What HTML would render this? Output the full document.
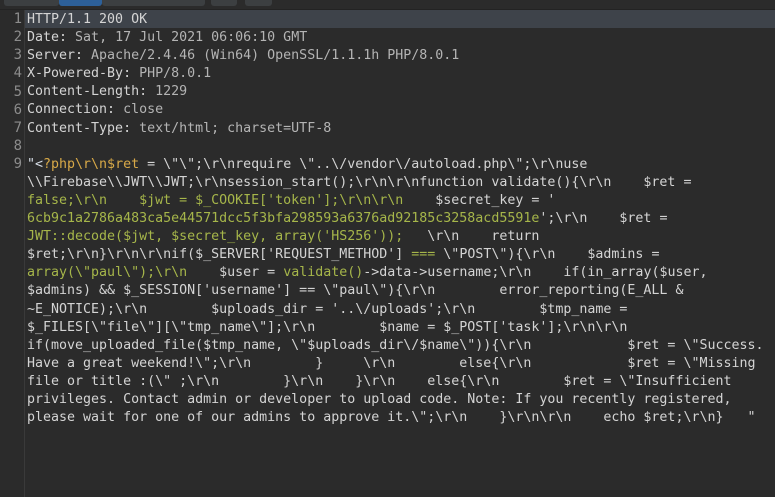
<!DOCTYPE html>
<html><head><meta charset="utf-8"><style>
html,body{margin:0;padding:0;background:#2b2b2b;width:775px;height:497px;overflow:hidden}
.top{position:absolute;left:0;top:0;width:775px;height:9px;background:#2b2b2b;border-bottom:1px solid #232323}
.tab{position:absolute;top:0;height:6px;background:#3c3f41;border-radius:0 0 3px 3px}
.gut{position:absolute;left:0;top:10px;width:24px;height:487px;background:#2b2b2b;border-right:1px solid #3a3a3a}
.hl{position:absolute;left:25px;top:10px;width:750px;height:18px;background:#3e434a}
pre{position:absolute;margin:0;top:11px;font-family:"DejaVu Sans Mono","Liberation Mono",monospace;font-size:13.3px;line-height:18.1px}
.num{left:0;width:22px;text-align:right;color:#8c8c8c;font-size:14px;top:10px;line-height:18.15px}
.code{left:27px;color:#d4d4d4}
.v{color:#b4b4b4}.y{color:#d8a948}.g{color:#a6b64a}.q{color:#d6dde6}
</style></head><body>
<div class="top"></div>
<div class="tab" style="left:4px;width:55px"></div>
<div class="tab" style="left:59px;width:43px;background:#2d6099"></div>
<div class="tab" style="left:102px;width:103px"></div>
<div class="tab" style="left:211px;width:26px"></div>
<div class="tab" style="left:245px;width:27px"></div>
<div class="gut"></div>
<div class="hl"></div>
<pre class="num">1
2
3
4
5
6
7
8
9</pre>
<pre class="code">HTTP/1.1 200 OK
Date: <span class="v">Sat, 17 Jul 2021 06:06:10 GMT</span>
Server: <span class="v">Apache/2.4.46 (Win64) OpenSSL/1.1.1h PHP/8.0.1</span>
X-Powered-By: <span class="v">PHP/8.0.1</span>
Content-Length: <span class="v">1229</span>
Connection: <span class="v">close</span>
Content-Type: <span class="v">text/html; charset=UTF-8</span>

<span class="q">"&lt;</span><span class="y">?php\r\n$ret</span> = \"\";\r\nrequire \"..\/vendor\/autoload.php\";\r\nuse
\\Firebase\\JWT\\JWT;\r\nsession_start();\r\n\r\nfunction validate(){\r\n    $ret =
<span class="g">false;\r\n    $jwt = $_COOKIE['token'];\r\n\r\n</span>    $secret_key = '
<span class="g">6cb9c1a2786a483ca5e44571dcc5f3bfa298593a6376ad92185c3258acd5591e</span>';\r\n    $ret =
<span class="g">JWT::decode($jwt, $secret_key, array('HS256'));</span>   \r\n    return
$ret;\r\n}\r\n\r\nif($_SERVER['REQUEST_METHOD'] <span class="g">===</span> \"POST\"){\r\n    $admins =
<span class="g">array(\"paul\");\r\n</span>    $user = <span class="g">validate()</span>-&gt;data-&gt;username;\r\n    if(in_array($user,
$admins) &amp;&amp; $_SESSION['username'] == \"paul\"){\r\n        error_reporting(E_ALL &amp;
~E_NOTICE);\r\n        $uploads_dir = '..\/uploads';\r\n        $tmp_name =
$_FILES[\"file\"][\"tmp_name\"];\r\n        $name = $_POST['task'];\r\n\r\n
if(move_uploaded_file($tmp_name, \"$uploads_dir\/$name\")){\r\n            $ret = \"Success.
Have a great weekend!\";\r\n        }     \r\n        else{\r\n            $ret = \"Missing
file or title :(\" ;\r\n        }\r\n    }\r\n    else{\r\n        $ret = \"Insufficient
privileges. Contact admin or developer to upload code. Note: If you recently registered,
please wait for one of our admins to approve it.\";\r\n    }\r\n\r\n    echo $ret;\r\n}   "</pre>
</body></html>
